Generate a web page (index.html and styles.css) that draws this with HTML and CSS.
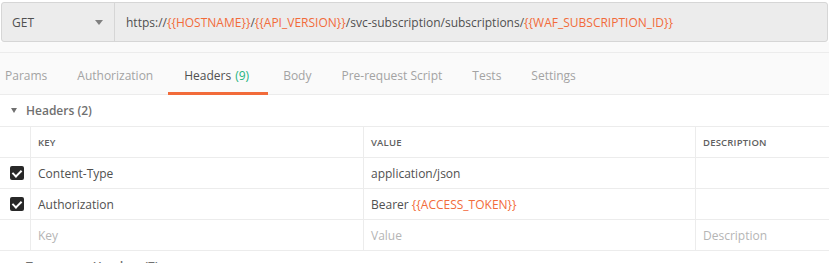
FILE: index.html
```html
<!DOCTYPE html>
<html lang="en">
<head>
    <meta charset="UTF-8">
    <title>Request - Headers</title>
    <link rel="stylesheet" href="styles.css">
</head>
<body>
    <div class="url-bar">
        <div class="method">
            <span>GET</span>
            <span class="caret"></span>
        </div>
        <div class="url">https://<span class="var">{{HOSTNAME}}</span>/<span class="var">{{API_VERSION}}</span>/svc-subscription/subscriptions/<span class="var">{{WAF_SUBSCRIPTION_ID}}</span></div>
    </div>
    <div class="strip"></div>

    <div class="tabs">
        <div class="tab">Params</div>
        <div class="tab">Authorization</div>
        <div class="tab active">Headers <span class="count">(9)</span></div>
        <div class="tab">Body</div>
        <div class="tab">Pre-request Script</div>
        <div class="tab">Tests</div>
        <div class="tab">Settings</div>
    </div>

    <div class="section-title"><span class="tri"></span>Headers (2)</div>

    <div class="grid">
        <div class="cell chk"></div>
        <div class="cell head">KEY</div>
        <div class="cell head">VALUE</div>
        <div class="cell head">DESCRIPTION</div>

        <div class="cell chk"><span class="box"></span></div>
        <div class="cell"><span>Content-Type</span></div>
        <div class="cell"><span>application/json</span></div>
        <div class="cell"></div>

        <div class="cell chk"><span class="box"></span></div>
        <div class="cell"><span>Authorization</span></div>
        <div class="cell"><span>Bearer <span class="var">{{ACCESS_TOKEN}}</span></span></div>
        <div class="cell"></div>

        <div class="cell chk"></div>
        <div class="cell ph">Key</div>
        <div class="cell ph">Value</div>
        <div class="cell ph">Description</div>
    </div>

    <div class="section-title temp"><span class="tri"></span>Temporary Headers (7)</div>
</body>
</html>
```
FILE: styles.css
```css
body { margin: 0; font-family: 'Open Sans', sans-serif; color: #505050; background: #fff; overflow: hidden; }

.url-bar { display: flex; height: 38px; margin: 2px 1px 0 1px; background: #ececec; border: 1px solid #d6d6d6; border-radius: 3px; }
.method { width: 113px; display: flex; align-items: center; justify-content: space-between; padding: 0 11px 0 10px; box-sizing: border-box; border-right: 1px solid #d6d6d6; font-size: 12px; }
.caret { width: 0; height: 0; border-left: 4px solid transparent; border-right: 4px solid transparent; border-top: 5px solid #808080; }
.url { display: flex; align-items: center; padding-left: 11px; font-size: 12px; white-space: nowrap; }
.var { color: #f26b3a; }

.strip { height: 10px; background: #fafafa; border-bottom: 1px solid #ececec; }

.tabs { display: flex; height: 41px; border-bottom: 1px solid #ececec; background: #fafafa; }
.tab { display: flex; align-items: center; padding: 5px 15px 0 15px; font-size: 12px; color: #a3a3a3; border-bottom: 3px solid transparent; margin-bottom: -1px; }
.tab:first-child { padding-left: 5px; }
.tab.active { color: #505050; border-bottom-color: #f26b3a; padding: 5px 19px 0 16px; }
.count { color: #26b47f; margin-left: 4px; }

.section-title { display: flex; align-items: center; height: 31px; padding-left: 11px; font-size: 12px; font-weight: 600; color: #707070; }
.tri { width: 0; height: 0; border-left: 3.5px solid transparent; border-right: 3.5px solid transparent; border-top: 5px solid #707070; margin-right: 9px; }
.temp { height: 24px; align-items: flex-end; }

.grid { display: grid; grid-template-columns: 30px 333px 332px 1fr; border-top: 1px solid #ececec; }
.cell { height: 30px; border-bottom: 1px solid #ececec; border-left: 1px solid #ececec; display: flex; align-items: center; padding-left: 7px; font-size: 12px; white-space: nowrap; }
.cell.chk { border-left: none; padding-left: 10px; }
.head { font-size: 9.5px; font-weight: 600; color: #606060; letter-spacing: 0.2px; }
.ph { color: #b5b5b5; }
.box { width: 14px; height: 14px; border-radius: 2px; background: #282828; position: relative; }
.box::after { content: ""; position: absolute; left: 4px; top: 2px; width: 4px; height: 7px; border: solid #fff; border-width: 0 2px 2px 0; transform: rotate(45deg); }
```
